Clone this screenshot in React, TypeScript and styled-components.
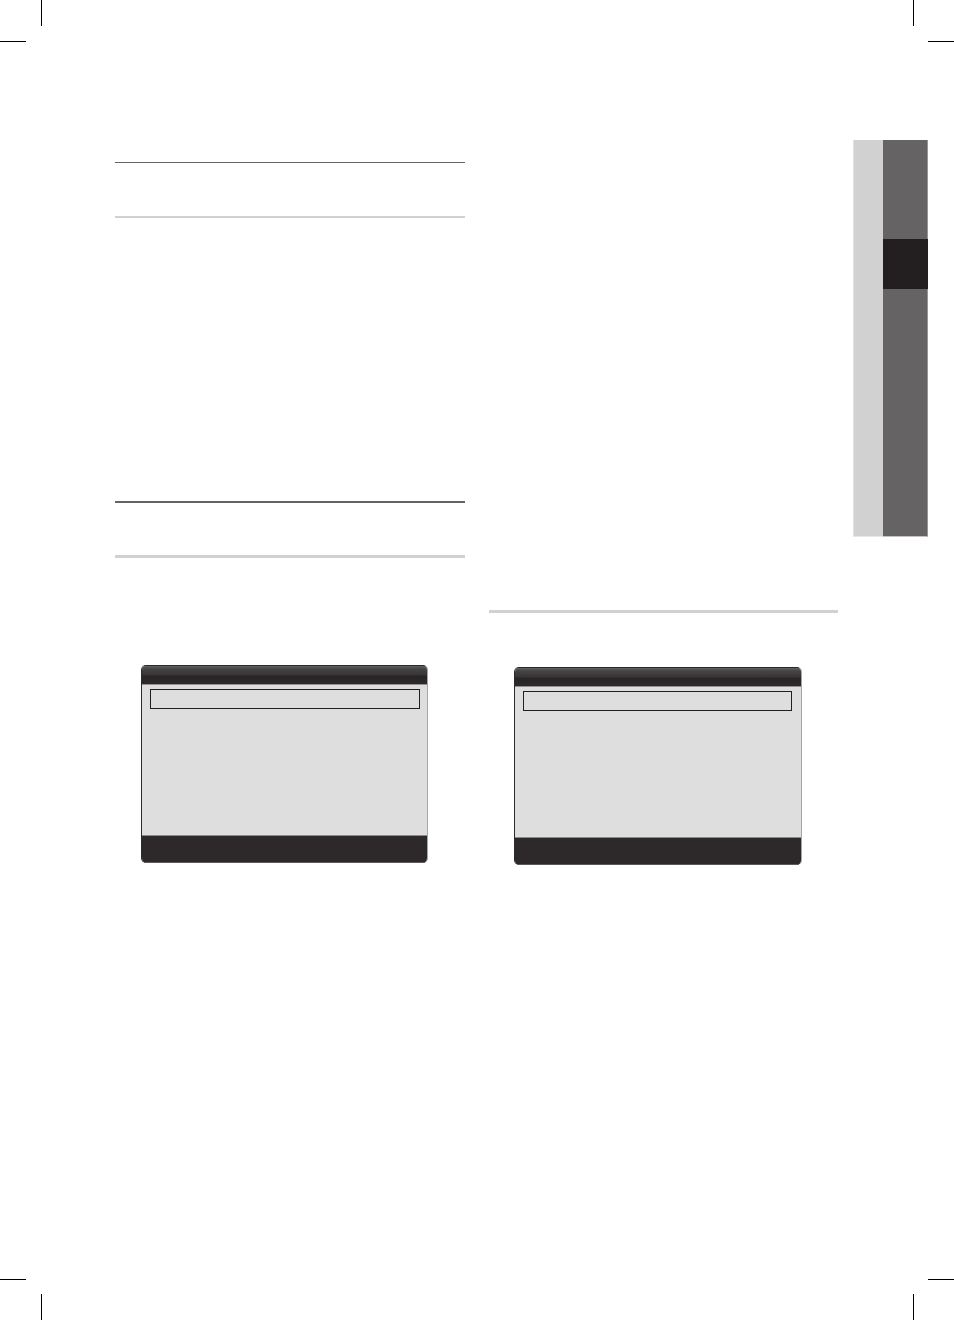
import React from "react";
import styled, { createGlobalStyle } from "styled-components";

const GlobalStyle = createGlobalStyle`
  * { box-sizing: border-box; }
  body { margin: 0; background: #fff; font-family: "Liberation Sans", Arial, sans-serif; }
`;

const Page = styled.div`
  display: flex;
  flex-direction: column;
  min-height: 100vh;
  background: #fff;
`;

const MarkRow = styled.div`
  display: flex;
  flex: none;
  justify-content: space-between;
`;

const CropMark = styled.span<{ $v: "top" | "bottom"; $h: "left" | "right" }>`
  width: ${(p) => (p.$h === "left" ? 42 : 41)}px;
  height: ${(p) => (p.$v === "top" ? 42 : 41)}px;
  background-image: linear-gradient(#000, #000), linear-gradient(#000, #000);
  background-repeat: no-repeat;
  background-size: 26px 1px, 1px 26px;
  background-position:
    ${(p) => p.$h} ${(p) => (p.$v === "top" ? "bottom" : "top")},
    ${(p) => (p.$h === "left" ? "right" : "left")} ${(p) => p.$v};
`;

const Sheet = styled.main`
  flex: 1;
  display: flex;
  align-items: flex-start;
  gap: 15px;
  padding: 0 26px 0 115px;
`;

const Columns = styled.div`
  flex: 1;
  display: grid;
  grid-template-columns: minmax(0, 350fr) minmax(0, 349fr);
  gap: 24px;
  padding-top: 120px;
`;

const Column = styled.section<{ $offset?: number }>`
  padding-top: ${(p) => p.$offset ?? 0}px;
`;

const Heading = styled.header<{ $height: number; $top: number; $bottom: number }>`
  height: ${(p) => p.$height}px;
  border-top: ${(p) => p.$top}px solid #656364;
  border-bottom: ${(p) => p.$bottom}px solid #d1d1d1;
`;

const Passage = styled.div`
  height: 283px;
`;

const Divider = styled.hr`
  height: 3px;
  margin: 0;
  border: 0;
  background: #d1d1d1;
`;

const Screen = styled.figure<{ $gap: number; $indent: number; $end: number }>`
  margin: ${(p) => p.$gap}px ${(p) => p.$end}px 0 ${(p) => p.$indent}px;
  height: 198px;
  display: flex;
  flex-direction: column;
  overflow: hidden;
  border-radius: 5px;
  border-left: 1px solid #2b292a;
  border-right: 1px solid #a5a5a5;
  background: #dedede;
`;

const ScreenTitle = styled.div`
  height: 20px;
  border-top: 1px solid #2b292a;
  border-bottom: 1px solid #929091;
  background: linear-gradient(#626061 0, #454344 3px, #373536 9px, #292526 10px, #2d292a 100%);
`;

const ScreenBody = styled.div<{ $inset: number }>`
  flex: 1;
  padding: 4px ${(p) => p.$inset}px 0 8px;
`;

const Selection = styled.div`
  height: 20px;
  border: 1px solid #231f20;
`;

const ScreenFooter = styled.div`
  height: 28px;
  border-top: 1px solid #8b898a;
  border-bottom: 1px solid #5c5a5b;
  background: #2d292a;
`;

const SideTab = styled.aside`
  width: 75px;
  height: 397px;
  margin-top: 98px;
  display: flex;
`;

const TabMargin = styled.div`
  flex: 1;
  border-left: 1px solid #e1e1e1;
  border-bottom: 1px solid #e8e8e8;
  background: #d1d1d1;
`;

const TabStrip = styled.div`
  width: 45px;
  display: flex;
  flex-direction: column;
`;

const TabBlock = styled.div<{ $height?: number; $last?: boolean }>`
  ${(p) => (p.$height ? `height: ${p.$height}px;` : "flex: 1;")}
  border-right: 1px solid #979596;
  border-bottom: ${(p) => (p.$last ? "1px solid #c4c3c3" : "0")};
  background: #656364;
`;

const ActiveBlock = styled.div`
  height: 50px;
  background: #231f20;
`;

interface MenuScreenProps {
  gap: number;
  indent: number;
  end: number;
  inset: number;
}

function MenuScreen({ gap, indent, end, inset }: MenuScreenProps) {
  return (
    <Screen $gap={gap} $indent={indent} $end={end}>
      <ScreenTitle />
      <ScreenBody $inset={inset}>
        <Selection />
      </ScreenBody>
      <ScreenFooter />
    </Screen>
  );
}

export default function App() {
  return (
    <>
      <GlobalStyle />
      <Page>
        <MarkRow>
          <CropMark $v="top" $h="left" />
          <CropMark $v="top" $h="right" />
        </MarkRow>
        <Sheet>
          <Columns>
            <Column>
              <Heading $height={56} $top={1} $bottom={2} />
              <Passage />
              <Heading $height={57} $top={2} $bottom={3} />
              <MenuScreen gap={107} indent={26} end={37} inset={7} />
            </Column>
            <Column $offset={448}>
              <Divider />
              <MenuScreen gap={54} indent={25} end={36} inset={9} />
            </Column>
          </Columns>
          <SideTab>
            <TabMargin />
            <TabStrip>
              <TabBlock $height={99} />
              <ActiveBlock />
              <TabBlock $last />
            </TabStrip>
          </SideTab>
        </Sheet>
        <MarkRow>
          <CropMark $v="bottom" $h="left" />
          <CropMark $v="bottom" $h="right" />
        </MarkRow>
      </Page>
    </>
  );
}
